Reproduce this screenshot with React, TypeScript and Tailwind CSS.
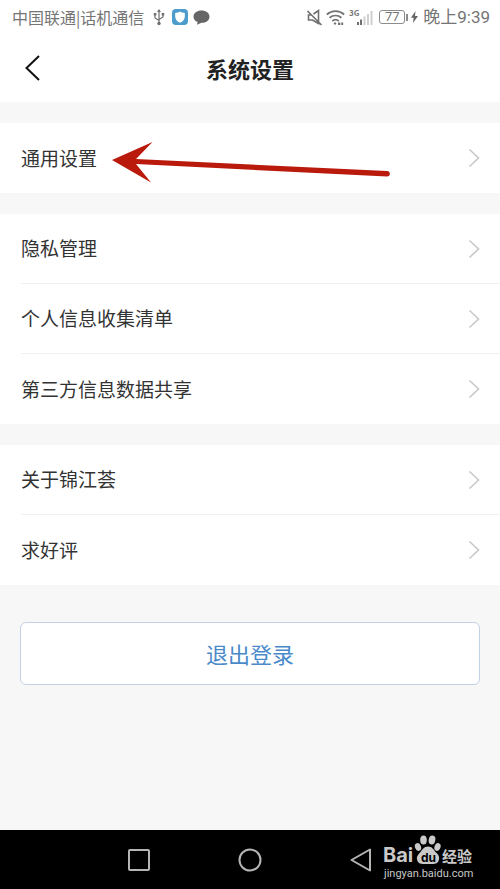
import React from "react";

const groups: string[][] = [
  ["通用设置"],
  ["隐私管理", "个人信息收集清单", "第三方信息数据共享"],
  ["关于锦江荟", "求好评"],
];

function StatusBar() {
  return (
    <div className="flex h-[34px] items-center justify-between pr-[10px] pl-[12px] text-[17px] leading-[34px] text-[#757575]">
      <div className="flex items-center">
        <span className="text-[16px] whitespace-nowrap">中国联通|话机通信</span>
        <svg className="ml-[9px] h-[17px] w-[12px]" viewBox="0 0 12 17" fill="none" stroke="#6f6f6f" strokeWidth="1.2">
          <path d="M6 2v12M2 5v4l4 2.500M10 5v3L6 10.500" />
          <path d="M6 0l2 3H4z" fill="#6f6f6f" stroke="none" />
          <circle cx="6" cy="14.500" r="1.700" fill="#6f6f6f" stroke="none" />
          <path d="M.8 4h2.500v2.500H.8zM8.700 4h2.500v2.500H8.700z" fill="#6f6f6f" stroke="none" />
        </svg>
        <svg className="ml-[7px] h-[16px] w-[16px]" viewBox="0 0 16 16">
          <rect width="16" height="16" rx="4" fill="#4d9dcc" />
          <path d="M8 2.500c1.500 1 3 1.400 4.800 1.400v3.600c0 3-1.900 5-4.800 6.200-2.900-1.200-4.800-3.200-4.800-6.200V3.900C5 3.900 6.500 3.500 8 2.500z" fill="#fff" />
        </svg>
        <svg className="ml-[5px] h-[15px] w-[17px]" viewBox="0 0 17 15" fill="#666">
          <path d="M8.500.5C13 .5 16.500 3 16.500 6.700S13 12.800 8.500 12.800L4 14.800l.6-2.700C2.200 11 .5 9.200.5 6.700.5 3 4 .5 8.500.5z" />
        </svg>
      </div>
      <div className="flex items-center font-[Roboto,'Noto_Sans_CJK_SC',sans-serif]">
        <svg className="h-[17px] w-[17px]" viewBox="0 0 17 17" fill="none" stroke="#707070" strokeWidth="1.600">
          <path d="M7.500 5L12.500 1.500v13L6.500 11H2.500V6h2.500M1.500 2l14 14" />
        </svg>
        <svg className="ml-[3px] h-[17px] w-[19px]" viewBox="0 0 19 17" fill="none" stroke="#747474" strokeWidth="1.800">
          <path d="M.8 5.500c5-4.500 12.400-4.500 17.400 0M3.500 8.800c3.600-3 8.400-3 12 0M6.200 12c2-1.600 4.600-1.600 6.600 0" />
          <path d="M7.500 14.500l1.500-1.500 1.500 1.500-1.500 1.500zM12 13.500h2.300v2.500H12zM15.200 13.500h2v2.500h-2z" fill="#747474" stroke="none" />
        </svg>
        <svg className="ml-[3px] h-[18px] w-[27px]" viewBox="0 0 27 18">
          <text x="1" y="8" fontSize="8" fontWeight="700" fill="#777" fontFamily="'Noto Sans CJK SC', sans-serif">3G</text>
          <path d="M9 14h2v3H9zM12 11.500h2V17h-2z" fill="#707070" />
          <path d="M15.500 8.500h2V17h-2zM19 6h2v11h-2zM22.500 3h2v14h-2z" fill="#cfcfcf" />
        </svg>
        <span className="ml-[4px] flex h-[14px] w-[26px] items-center justify-center rounded-[3px] border border-[#8c8c8c] text-[13px] leading-[12px]">77</span>
        <span className="ml-px h-[7px] w-[2px] bg-[#8c8c8c]" />
        <svg className="ml-[3px] h-[12px] w-[7px]" viewBox="0 0 7 12" fill="#666">
          <path d="M4.500 0L0 6.800h2.600L2 12l5-7H4z" />
        </svg>
        <time className="ml-[5px] whitespace-nowrap">晚上9:39</time>
      </div>
    </div>
  );
}

function Row({ label }: { label: string }) {
  return (
    <li className="h-[70px] border-b border-[#f1f1f1] last:border-b-0">
      <button type="button" className="flex h-full w-full items-center justify-between pr-5 text-left text-[19px] text-[#333]">
        <span>{label}</span>
        <svg className="h-[20px] w-[12px]" viewBox="0 0 12 20" fill="none" stroke="#c8c8c8" strokeWidth="1.600">
          <path d="M1.500 1.500L10.500 10l-9 8.500" />
        </svg>
      </button>
    </li>
  );
}

function Arrow() {
  return (
    <svg className="pointer-events-none absolute top-[17px] left-[110px] h-[44px] w-[282px]" viewBox="0 0 282 44" fill="#b91a0c">
      <path d="M2 20L42.500 2 26 19l251 12a2.800 2.800 0 0 1 0 5.600L26 24l15 18.500z" />
    </svg>
  );
}

function Watermark() {
  return (
    <div className="absolute top-[5px] right-[20px]">
      <svg className="h-[50px] w-[98px]" viewBox="0 0 98 50" fill="#c9c9c9">
        <text x="1" y="27" fontSize="20" fontWeight="700" fontFamily="Inter, sans-serif">Bai</text>
        <ellipse cx="36" cy="12" rx="3" ry="4" transform="rotate(-20 36 12)" />
        <ellipse cx="41.500" cy="5" rx="3.300" ry="4.500" />
        <ellipse cx="50" cy="5" rx="3.300" ry="4.500" transform="rotate(10 50 5)" />
        <ellipse cx="55.500" cy="12" rx="3" ry="4" transform="rotate(20 55.500 12)" />
        <path d="M46 11.500c4 0 5.500 3 8 6 3 3 4 5 2.500 8.500-1.500 3.500-5.500 3-10.500 3s-9 .5-10.500-3c-1.500-4 0-5.500 2.500-8.500s4-6 8-6z" />
        <text x="39" y="27" fontSize="12" fontWeight="700" fill="#000" fontFamily="Inter, sans-serif">du</text>
        <text x="60" y="27" fontSize="15" fontWeight="700" fontFamily="'Noto Sans CJK SC', sans-serif">经验</text>
        <text x="2" y="42" fontSize="11" fontFamily="Roboto, sans-serif">jingyan.baidu.com</text>
      </svg>
    </div>
  );
}

export default function App() {
  return (
    <div className="flex min-h-screen flex-col bg-[#f7f7f7] font-['Noto_Sans_CJK_SC',sans-serif]">
      <header className="bg-white">
        <StatusBar />
        <div className="grid h-[68px] grid-cols-[1fr_auto_1fr] items-center px-5">
          <button type="button" aria-label="返回" className="w-[24px]">
            <svg className="ml-1 h-[28px] w-[18px]" viewBox="0 0 18 28" fill="none" stroke="#111" strokeWidth="2">
              <path d="M15 2L2.500 14 15 26" />
            </svg>
          </button>
          <h1 className="text-[22px] font-bold text-[#222]">系统设置</h1>
        </div>
      </header>
      <main>
        {groups.map((rows, i) => (
          <section key={rows[0]} className="relative mt-[21px] bg-white pl-[21px]">
            <ul>
              {rows.map((label) => (
                <Row key={label} label={label} />
              ))}
            </ul>
            {i === 0 && <Arrow />}
          </section>
        ))}
        <div className="px-5 pt-[37px] pb-8">
          <button type="button" className="h-[63px] w-full rounded-[6px] border border-[#c3d1e6] bg-white text-[22px] text-[#4a8aca]">
            退出登录
          </button>
        </div>
      </main>
      <nav className="relative mt-auto grid h-[59px] grid-cols-[84px_1fr_1fr_1fr_84px] items-center justify-items-center bg-black">
        <button type="button" aria-label="最近任务" className="col-start-2">
          <svg className="h-6 w-6" viewBox="0 0 24 24" fill="none" stroke="#b5b5b5" strokeWidth="2">
            <rect x="2" y="2" width="20" height="20" rx="1" />
          </svg>
        </button>
        <button type="button" aria-label="主屏幕">
          <svg className="h-6 w-6" viewBox="0 0 24 24" fill="none" stroke="#b5b5b5" strokeWidth="2">
            <circle cx="12" cy="12" r="10.500" />
          </svg>
        </button>
        <button type="button" aria-label="后退">
          <svg className="h-6 w-6" viewBox="0 0 24 24" fill="none" stroke="#b5b5b5" strokeWidth="2" strokeLinejoin="round">
            <path d="M21 1.500v21L2.500 12z" />
          </svg>
        </button>
        <Watermark />
      </nav>
    </div>
  );
}
